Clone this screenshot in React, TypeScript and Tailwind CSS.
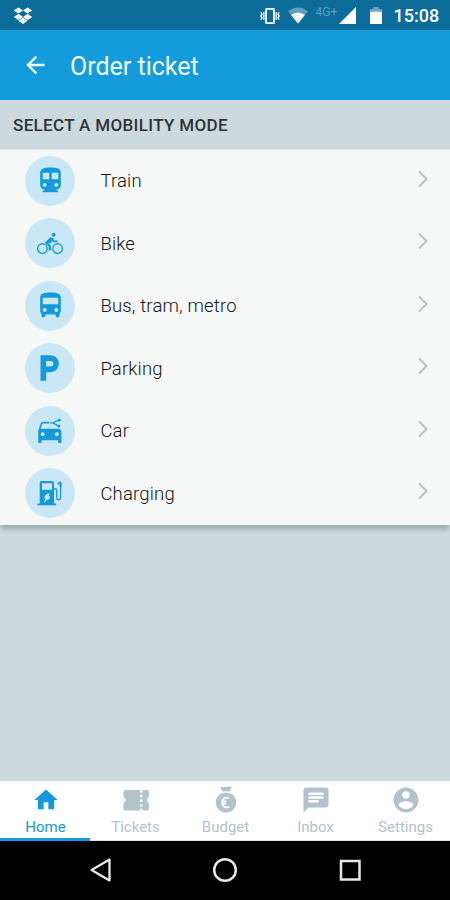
import React from "react";

const paths = {
  train:
    "M12 2c-4 0-8 .5-8 4v9.5C4 17.43 5.57 19 7.5 19L6 20.5v.5h12v-.5L16.5 19c1.93 0 3.5-1.57 3.5-3.5V6c0-3.5-3.58-4-8-4zM7.5 17c-.83 0-1.5-.67-1.5-1.5S6.67 14 7.5 14s1.5.67 1.5 1.5S8.33 17 7.5 17zm3.5-6H6V6h5v5zm5.5 6c-.83 0-1.5-.67-1.5-1.5s.67-1.5 1.5-1.5 1.5.67 1.5 1.5-.67 1.5-1.5 1.5zm1.5-6h-5V6h5v5z",
  bus: "M4 16c0 .88.39 1.67 1 2.22V20c0 .55.45 1 1 1h1c.55 0 1-.45 1-1v-1h8v1c0 .55.45 1 1 1h1c.55 0 1-.45 1-1v-1.78c.61-.55 1-1.34 1-2.22V6c0-3.5-3.58-4-8-4s-8 .5-8 4v10zm3.5 1c-.83 0-1.5-.67-1.5-1.5S6.67 14 7.5 14s1.5.67 1.5 1.5S8.33 17 7.5 17zm9 0c-.83 0-1.5-.67-1.5-1.5s.67-1.5 1.5-1.5 1.5.67 1.5 1.5-.67 1.5-1.5 1.5zm1.5-6H6V6h12v5z",
  parking: "M13 3H6v18h4v-6h3c3.31 0 6-2.69 6-6s-2.690-6-6-6zm.2 8H10V7h3.200c1.100 0 2 .9 2 2s-.9 2-2 2z",
  home: "M10 20v-6h4v6h5v-8h3L12 3 2 12h3v8z",
  chat: "M20 2H4c-1.1 0-1.99.9-1.99 2L2 22l4-4h14c1.1 0 2-.9 2-2V4c0-1.1-.9-2-2-2zM6 9h12v2H6V9zm8 5H6v-2h8v2zm4-6H6V6h12v2z",
  account:
    "M12 2C6.48 2 2 6.48 2 12s4.48 10 10 10 10-4.48 10-10S17.52 2 12 2zm0 3c1.66 0 3 1.34 3 3s-1.34 3-3 3-3-1.34-3-3 1.34-3 3-3zm0 14.2c-2.5 0-4.71-1.28-6-3.22.03-1.99 4-3.08 6-3.08 1.99 0 5.97 1.09 6 3.08-1.29 1.94-3.5 3.22-6 3.22z",
};

function Glyph({ d, className }: { d: string; className: string }) {
  return (
    <svg viewBox="0 0 24 24" fill="currentColor" className={className}>
      <path d={d} />
    </svg>
  );
}

function BikeIcon() {
  return (
    <svg viewBox="0 0 30 30" className="size-[30px]" fill="none" stroke="currentColor">
      <circle cx="7.4" cy="20.6" r="4.800" strokeWidth="1.400" />
      <circle cx="22.6" cy="20.6" r="4.800" strokeWidth="1.400" />
      <circle cx="18.6" cy="6.8" r="2" fill="currentColor" stroke="none" />
      <path d="M14.800 22.600v-4.800l-3.400-3 4-4" strokeWidth="2.300" strokeLinejoin="round" />
      <path d="M12.400 13.800l3.400-3.800 2 .6-2.600 4.200z" fill="currentColor" strokeWidth="1.200" strokeLinejoin="round" />
      <path d="M16.600 10.600l2.200 2.800h3.800" strokeWidth="1.900" />
    </svg>
  );
}

function CarIcon() {
  return (
    <svg viewBox="0 0 30 30" className="size-[30px]" fill="none" stroke="currentColor">
      <path
        d="M3.200 14.600L5.500 12.800h18.600l2.300 1.800v11.300a1 1 0 0 1-1 1h-1.400a1 1 0 0 1-1-1V24.200H6.600v1.700a1 1 0 0 1-1 1H4.200a1 1 0 0 1-1-1zM7.700 16.200a2 2 0 1 0 0 4 2 2 0 0 0 0-4zm14.200 0a2 2 0 1 0 0 4 2 2 0 0 0 0-4z"
        fill="currentColor"
        stroke="none"
        fillRule="evenodd"
      />
      <path d="M4.300 14.200L6.400 7.700q.4-1.100 1.600-1.100h6" strokeWidth="1.600" />
      <path d="M14.500 6.900h3.200l6-2.800M17.700 6.900l5.600 3" strokeWidth="1.400" />
      <circle cx="24.400" cy="3.900" r="1.500" fill="currentColor" stroke="none" />
      <circle cx="23.800" cy="10.100" r="1.500" fill="currentColor" stroke="none" />
    </svg>
  );
}

function ChargingIcon() {
  return (
    <svg viewBox="0 0 30 30" className="size-[30px]" fill="none" stroke="currentColor">
      <path
        d="M6.600 3h10.600a1.800 1.800 0 0 1 1.800 1.800v20.600h2.200v1.900H2.400v-1.900h2.300V4.900A1.900 1.900 0 0 1 6.600 3zM7 5.200v6.600h10V5.200zM14.600 15.300q-5 .8-5.200 4.200l1 1.600-1.600 3 .9.500 1.600-2.600q3.400 0 3.800-3.600l-1.400-.2z"
        fill="currentColor"
        stroke="none"
        fillRule="evenodd"
      />
      <path d="M19 11h1.600q1.200 0 1.200 1.200v7.500q0 1.900 1.900 1.900t1.900-1.900V7" strokeWidth="1.300" />
      <path d="M22.600 5.700l3.700-1.300M25.700 4.400v4.600" strokeWidth="2" />
    </svg>
  );
}

function TicketIcon() {
  return (
    <svg viewBox="0 0 28 24" className="h-6 w-7" fill="currentColor">
      <path d="M3.300 2h21.800a1.800 1.800 0 0 1 1.800 1.800V9.200a3 3 0 0 0 0 5.600v6.200a1.500 1.500 0 0 1-1.500 1.500H3a1.500 1.500 0 0 1-1.500-1.500v-6.200a3 3 0 0 0 0-5.600V3.800A1.800 1.800 0 0 1 3.300 2z" />
      <path d="M19.300 2v20.500" stroke="#fff" strokeWidth="2.400" strokeDasharray="2.600 2.100" />
    </svg>
  );
}

function BudgetIcon() {
  return (
    <svg viewBox="0 0 28 28" className="size-7" fill="none" stroke="currentColor">
      <circle cx="14" cy="16.500" r="10.300" fill="currentColor" stroke="none" />
      <path d="M8 .800q3 .8 6 0t6 0l-2.800 5.400h-6.400z" fill="currentColor" stroke="none" />
      <path d="M9 6.600q5-1.500 10 0" stroke="#fff" strokeWidth="1.200" />
      <path d="M17.300 12.200a4.900 4.900 0 1 0 0 8.600M9.300 15.300h5M9.300 17.700h4.600" stroke="#fff" strokeWidth="1.800" />
    </svg>
  );
}

const modes = [
  { label: "Train", icon: <Glyph d={paths.train} className="size-[31px]" /> },
  { label: "Bike", icon: <BikeIcon /> },
  { label: "Bus, tram, metro", icon: <Glyph d={paths.bus} className="size-[31px]" /> },
  { label: "Parking", icon: <Glyph d={paths.parking} className="mr-0.5 size-[34px]" /> },
  { label: "Car", icon: <CarIcon /> },
  { label: "Charging", icon: <ChargingIcon /> },
];

const tabs = [
  { label: "Home", icon: <Glyph d={paths.home} className="size-7" />, active: true },
  { label: "Tickets", icon: <TicketIcon />, active: false },
  { label: "Budget", icon: <BudgetIcon />, active: false },
  { label: "Inbox", icon: <Glyph d={paths.chat} className="size-[30px]" />, active: false },
  { label: "Settings", icon: <Glyph d={paths.account} className="size-[30px]" />, active: false },
];

function StatusBar() {
  return (
    <div className="flex h-[30px] shrink-0 items-center bg-[#0c6d9b] pt-px text-white">
      <svg viewBox="0 0 20 18" className="ml-[13px] h-[18px] w-5" fill="currentColor">
        <path d="M5.400 .4L10 3.500 5.400 6.600.8 3.500zM14.600.4l4.600 3.100-4.600 3.100L10 3.500zM5.400 6.800L10 9.900l-4.600 3.100L.8 9.900zM14.600 6.800l4.600 3.100-4.600 3.100L10 9.900zM10 10.700l4.600 3.100L10 16.900l-4.600-3.100z" />
      </svg>
      <svg viewBox="0 0 20 18" className="ml-[227px] h-[18px] w-5" fill="none" stroke="currentColor">
        <rect x="6" y="1.800" width="8" height="14.400" rx=".6" strokeWidth="1.800" />
        <path d="M3.900 5v8M16.100 5v8" strokeWidth="1.200" />
        <path d="M.8 5.400l1.300 1.800L.8 9l1.300 1.800-1.300 1.800M19.200 5.400l-1.300 1.800L19.200 9l-1.300 1.800 1.300 1.800" strokeWidth="1.300" />
      </svg>
      <svg viewBox="0 0 20 17" className="ml-[7.500px] h-[17px] w-5" fill="currentColor">
        <path d="M0 4.300Q10-3.300 20 4.300L10 16.500z" opacity=".35" />
        <path d="M3.200 8Q10 2.800 16.800 8L10 16.500z" />
      </svg>
      <span className="ml-2 w-[23px] pb-[7px] text-[12px] leading-3 text-[#5b9dbd]">4G+</span>
      <svg viewBox="0 0 17 17" className="h-[17px] w-[17px]" fill="currentColor">
        <path d="M17 0v17H0z" />
      </svg>
      <svg viewBox="0 0 12 17" className="ml-[14px] h-[17px] w-3" fill="currentColor">
        <path d="M0 5V2h3.400V0h5.200v2H12v3z" opacity=".4" />
        <path d="M0 4.800h12V16a1 1 0 0 1-1 1H1a1 1 0 0 1-1-1z" />
      </svg>
      <span className="ml-3 text-[18px] leading-5 font-medium">15:08</span>
    </div>
  );
}

function SystemNav() {
  return (
    <div className="flex h-[59.500px] shrink-0 items-center justify-between bg-black px-[87px] text-[#e8e8e8]">
      <svg viewBox="0 0 26 26" className="size-[26px]" fill="none" stroke="currentColor" strokeWidth="2.300">
        <path d="M22.500 2.600v20.800L4.600 13z" strokeLinejoin="round" />
      </svg>
      <svg viewBox="0 0 26 26" className="size-[26px]" fill="none" stroke="currentColor" strokeWidth="2.500">
        <circle cx="13" cy="13" r="10.800" />
      </svg>
      <svg viewBox="0 0 26 26" className="size-[26px]" fill="none" stroke="currentColor" strokeWidth="2.500">
        <rect x="4" y="4" width="18.500" height="18.500" />
      </svg>
    </div>
  );
}

export default function App() {
  return (
    <div className="flex h-[900px] w-[450px] flex-col overflow-hidden bg-[#ccdae0] font-['Roboto','Noto_Sans',sans-serif]">
      <StatusBar />
      <header className="flex h-[70px] shrink-0 items-center bg-[#149bdc] text-[#f0fbff]">
        <svg viewBox="0 0 20 20" className="ml-[26px] size-5" fill="none" stroke="currentColor" strokeWidth="2.400">
          <path d="M18.500 10H2.500M10.300 1.700L2 10l8.300 8.300" />
        </svg>
        <h1 className="ml-[24px] pt-1 text-[25px] leading-8 font-normal">Order ticket</h1>
      </header>
      <h2 className="h-[49.500px] shrink-0 border-b border-[#dfe7e9] pt-[14px] pl-[13px] text-[17px] leading-[22px] font-medium tracking-[0.34px] text-[#2e3336]">
        SELECT A MOBILITY MODE
      </h2>
      <ul className="shrink-0 bg-[#f6f8f8] shadow-[0_5px_5px_-1px_rgba(80,100,100,0.4)]">
        {modes.map((m) => (
          <li key={m.label} className="flex h-[62.500px] items-center pl-[25.400px]">
            <span className="flex size-[50px] items-center justify-center rounded-full bg-[#c9e7f5] text-[#149adb]">
              {m.icon}
            </span>
            <span className="ml-[25px] flex-1 pt-px text-[18.500px] leading-6 font-light tracking-[0.18px] text-[#141617]">
              {m.label}
            </span>
            <svg viewBox="0 0 12 20" className="mr-[21px] mb-1 h-5 w-3" fill="none" stroke="#bcc0c1" strokeWidth="2">
              <path d="M2 2.500l7.500 7.500L2 17.500" />
            </svg>
          </li>
        ))}
      </ul>
      <div className="flex-1" />
      <nav className="grid h-[60px] shrink-0 grid-cols-5 bg-white">
        {tabs.map((t) => (
          <div
            key={t.label}
            className={
              t.active
                ? "flex flex-col items-center border-b-[3px] border-[#149adb] pl-px text-[#149adb]"
                : "flex flex-col items-center border-b border-[#dce3e5] pl-px text-[#b1c4cb]"
            }
          >
            <span className="flex h-[38px] items-center pt-px">{t.icon}</span>
            <span className="text-[15px] leading-4">{t.label}</span>
          </div>
        ))}
      </nav>
      <SystemNav />
    </div>
  );
}
